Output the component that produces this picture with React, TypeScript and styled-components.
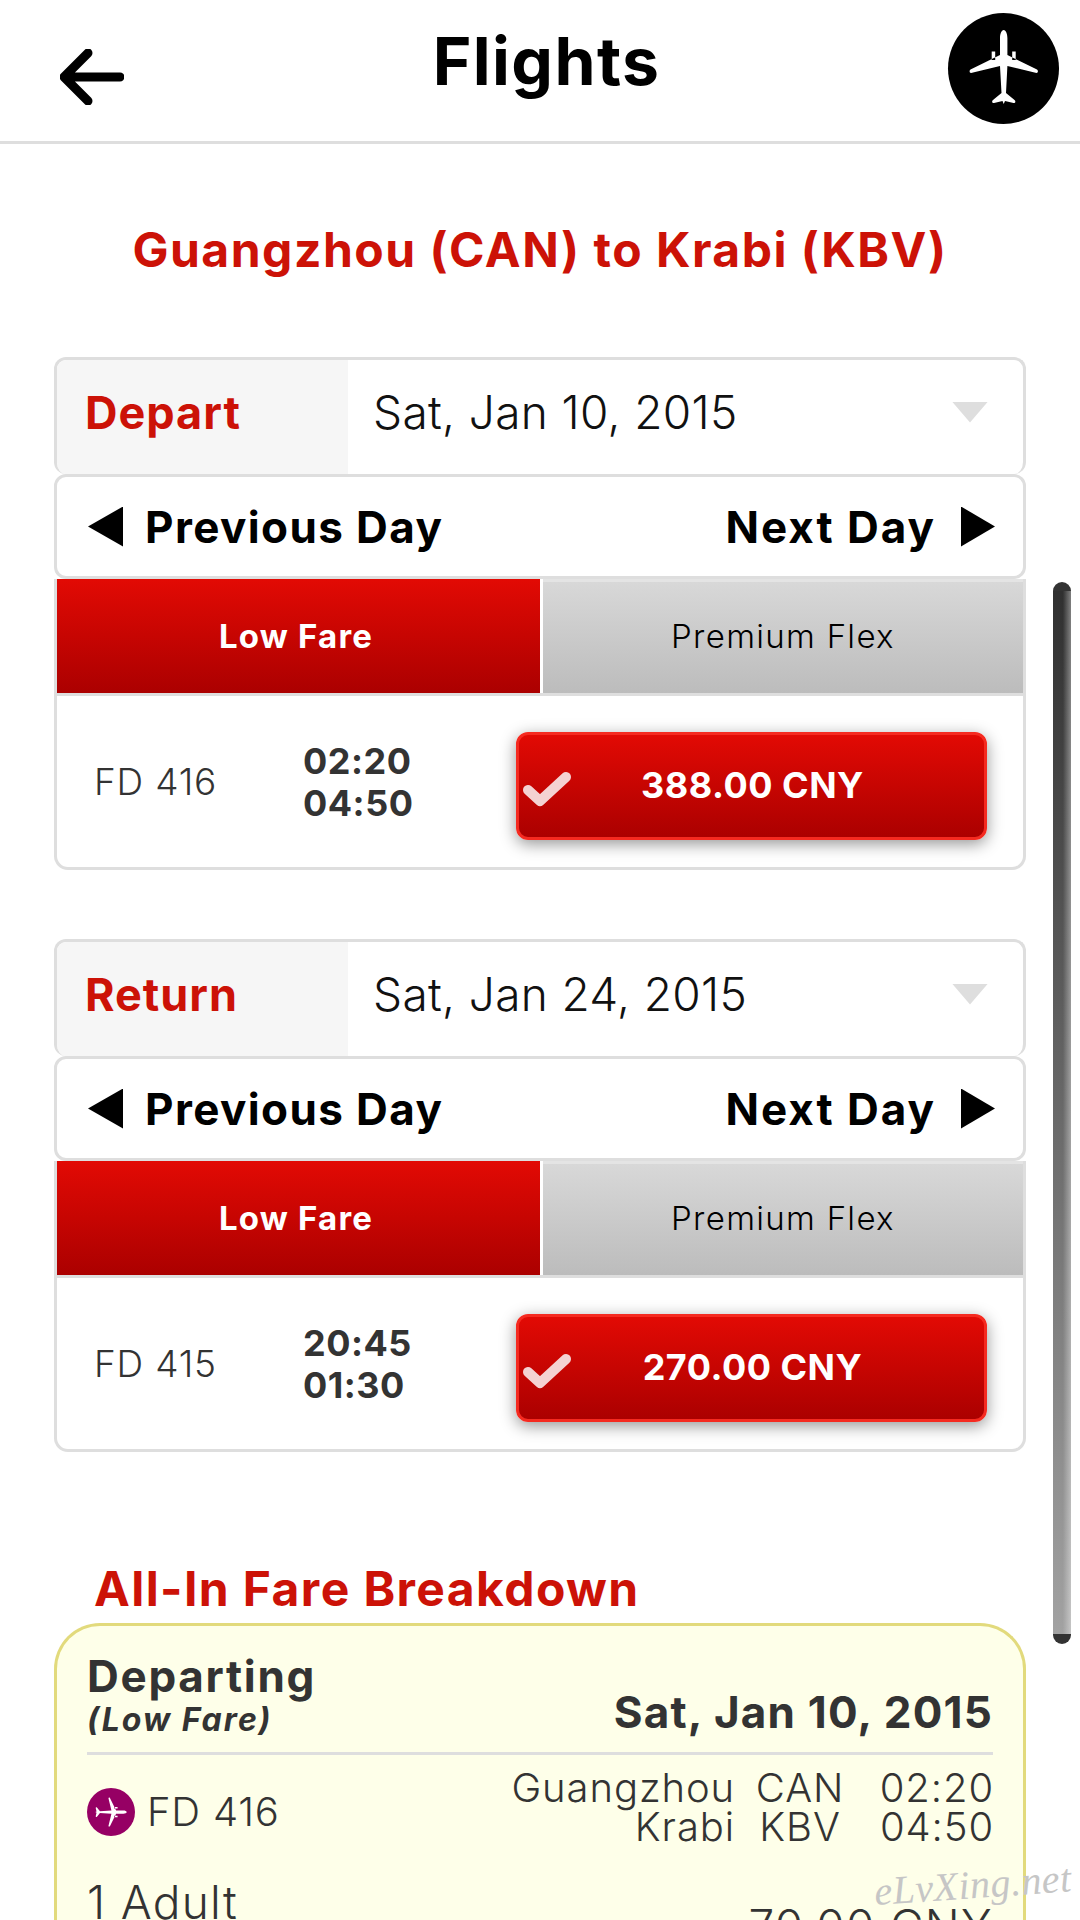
import React from 'react';
import styled, { createGlobalStyle } from 'styled-components';

const FONT = `Inter, "Open Sans", "Liberation Sans", sans-serif`;
const RED = '#cc1207';

const GlobalStyle = createGlobalStyle`
  html, body {
    margin: 0;
    padding: 0;
    background: #ffffff;
  }
  * {
    box-sizing: border-box;
  }
`;

const Page = styled.div`
  position: relative;
  width: 1080px;
  height: 1920px;
  overflow: hidden;
  background: #ffffff;
  font-family: ${FONT};
  color: #333333;
`;

const Header = styled.header`
  height: 144px;
  border-bottom: 3px solid #dedede;
  display: flex;
  align-items: flex-start;
  justify-content: space-between;
  padding: 13px 21px 0 60px;
`;

const BackIcon = styled.svg`
  width: 64px;
  height: 56px;
  margin-top: 36px;
`;

const Title = styled.h1`
  margin: 11px 0 0 21px;
  font-size: 66px;
  line-height: 74px;
  font-weight: 700;
  letter-spacing: 1.4px;
  color: #000000;
`;

const PlaneBadge = styled.div`
  width: 111px;
  height: 111px;
  border-radius: 50%;
  background: #000000;
`;

const RouteTitle = styled.h2`
  margin: 0;
  padding-top: 78px;
  height: 213px;
  text-align: center;
  font-size: 48px;
  line-height: 56px;
  font-weight: 700;
  letter-spacing: 1.5px;
  color: ${RED};
`;

const Sections = styled.div`
  margin: 0 54px;
  display: flex;
  flex-direction: column;
  gap: 69px;
`;

const Section = styled.section`
  display: flex;
  flex-direction: column;
`;

const DateBox = styled.div`
  height: 117px;
  border: 3px solid #dedede;
  border-bottom: 0;
  border-radius: 12px;
  display: flex;
  overflow: hidden;
`;

const DateLabel = styled.div`
  width: 291px;
  background: #f6f6f6;
  padding: 0 0 10px 28px;
  display: flex;
  align-items: center;
  font-size: 45px;
  font-weight: 700;
  letter-spacing: 1px;
  color: ${RED};
`;

const DateValue = styled.div`
  flex: 1;
  display: flex;
  align-items: center;
  justify-content: space-between;
  padding: 0 35px 10px 25px;
  font-size: 46px;
  font-weight: 300;
  letter-spacing: 0.35px;
  color: #111111;
`;

const Triangle = styled.span<{ $dir: 'left' | 'right' | 'down'; $w: number; $h: number; $color: string }>`
  display: block;
  flex: none;
  width: ${(p) => p.$w}px;
  height: ${(p) => p.$h}px;
  background: ${(p) => p.$color};
  clip-path: ${(p) =>
    p.$dir === 'left'
      ? 'polygon(100% 0, 100% 100%, 0 50%)'
      : p.$dir === 'right'
      ? 'polygon(0 0, 100% 50%, 0 100%)'
      : 'polygon(0 0, 100% 0, 50% 100%)'};
`;

const DayNav = styled.div`
  height: 105px;
  border: 3px solid #dedede;
  border-radius: 12px;
  display: flex;
  align-items: center;
  justify-content: space-between;
  padding: 0 28px 0 31px;
`;

const DayLink = styled.div<{ $next?: boolean }>`
  display: flex;
  align-items: center;
  gap: ${(p) => (p.$next ? '25px' : '22px')};
  font-size: 44px;
  font-weight: 700;
  letter-spacing: ${(p) => (p.$next ? '2px' : '1.4px')};
  color: #000000;
`;

const FareCard = styled.div`
  border: 3px solid #dedede;
  border-top: 0;
  border-radius: 0 0 14px 14px;
  overflow: hidden;
`;

const Tabs = styled.div`
  display: flex;
  height: 117px;
  border-bottom: 3px solid #dedede;
`;

const Tab = styled.div<{ $active?: boolean }>`
  flex: 1;
  display: flex;
  align-items: center;
  justify-content: center;
  font-size: 33px;
  letter-spacing: ${(p) => (p.$active ? '1.2px' : '1.3px')};
  font-weight: ${(p) => (p.$active ? 700 : 300)};
  color: ${(p) => (p.$active ? '#ffffff' : '#000000')};
  background: ${(p) =>
    p.$active
      ? 'linear-gradient(#e20a04, #ab0000)'
      : 'linear-gradient(#d8d8d8, #bcbcbc)'};
  ${(p) =>
    p.$active
      ? 'margin-right: 3px; flex: 0 0 483px; padding-right: 5px;'
      : 'border-top: 3px solid #e4e4e4; padding-bottom: 3px;'}
`;

const FareRow = styled.div`
  height: 171px;
  display: flex;
  align-items: center;
  padding: 0 36px 0 37px;
`;

const FlightNo = styled.div`
  width: 209px;
  font-size: 37px;
  font-weight: 300;
  letter-spacing: 0.8px;
  color: #333333;
`;

const Times = styled.div`
  flex: 1;
  font-size: 36px;
  line-height: 42px;
  font-weight: 700;
  letter-spacing: 0.5px;
  color: #333333;
`;

const PriceButton = styled.button`
  position: relative;
  width: 471px;
  height: 108px;
  margin-top: 8px;
  padding: 0 0 2px 2px;
  border: 3px solid #f52a20;
  border-radius: 12px;
  background: linear-gradient(#e20a04, #ab0000);
  box-shadow: 0 4px 16px rgba(0, 0, 0, 0.42);
  font-family: ${FONT};
  font-size: 36px;
  font-weight: 700;
  letter-spacing: 0.5px;
  color: #ffffff;
`;

const CheckIcon = styled.svg`
  position: absolute;
  left: 4px;
  top: 37px;
  width: 48px;
  height: 35px;
`;

const BreakdownTitle = styled.h2`
  margin: 107px 0 0 94px;
  height: 64px;
  font-size: 48px;
  line-height: 60px;
  font-weight: 700;
  letter-spacing: 1.4px;
  color: ${RED};
`;

const BreakdownCard = styled.div`
  margin: 0 54px;
  height: 340px;
  padding: 26px 30px 0 30px;
  border: 3px solid #e2da7c;
  border-bottom: 0;
  border-radius: 46px 46px 0 0;
  background: #feffe9;
`;

const LegHeader = styled.div`
  display: flex;
  align-items: flex-end;
  justify-content: space-between;
  height: 103px;
  border-bottom: 3px solid #dedede;
  padding-bottom: 14px;
`;

const LegTitle = styled.div`
  margin-bottom: 2px;
  font-size: 44px;
  line-height: 46px;
  font-weight: 700;
  letter-spacing: 1.7px;
  color: #333333;
`;

const LegSub = styled.div`
  font-size: 32px;
  line-height: 37px;
  font-weight: 700;
  font-style: italic;
  letter-spacing: 2px;
  color: #333333;
`;

const LegDate = styled.div`
  margin-bottom: 3px;
  font-size: 44px;
  line-height: 46px;
  font-weight: 700;
  letter-spacing: 1.2px;
  color: #333333;
`;

const LegRow = styled.div`
  display: flex;
  align-items: flex-start;
  justify-content: space-between;
  padding-top: 13px;
`;

const LegFlight = styled.div`
  display: flex;
  align-items: center;
  gap: 12px;
  margin-top: 19px;
  font-size: 40px;
  font-weight: 300;
  letter-spacing: 0.8px;
`;

const PurpleBadge = styled.div`
  width: 48px;
  height: 48px;
  border-radius: 50%;
  background: #960064;
  display: flex;
  align-items: center;
  justify-content: center;
`;

const SmallPlane = styled.svg`
  width: 34px;
  height: 34px;
  transform: rotate(90deg);
`;

const RouteGrid = styled.div`
  display: grid;
  grid-template-columns: auto 90px 129px;
  column-gap: 20px;
  margin-right: -1px;
  font-size: 40px;
  line-height: 39px;
  font-weight: 300;
  letter-spacing: 0.9px;
  color: #333333;
`;

const City = styled.div`
  text-align: right;
`;

const Code = styled.div`
  text-align: center;
`;

const Clock = styled.div`
  text-align: right;
`;

const PaxRow = styled.div`
  display: flex;
  align-items: flex-start;
  justify-content: space-between;
  margin-top: 29px;
  font-size: 46px;
  line-height: 54px;
  font-weight: 300;
  letter-spacing: 1.3px;
`;

const PaxPrice = styled.div`
  margin-top: 24px;
`;

const Scrollbar = styled.div`
  position: absolute;
  left: 1053px;
  top: 591px;
  width: 18px;
  height: 1043px;
  background:
    linear-gradient(to right, rgba(255, 255, 255, 0) 55%, rgba(255, 255, 255, 0.38) 100%),
    linear-gradient(#303030, #a2a2a2);

  &::before,
  &::after {
    content: '';
    position: absolute;
    left: 0;
    width: 18px;
    height: 9px;
    background: #333333;
  }
  &::before {
    top: -9px;
    border-radius: 9px 9px 0 0;
  }
  &::after {
    bottom: -10px;
    height: 10px;
    border-radius: 0 0 9px 9px;
  }
`;

const Watermark = styled.div`
  position: absolute;
  left: 876px;
  top: 1868px;
  font-family: "Liberation Serif", serif;
  font-style: italic;
  font-size: 40px;
  line-height: 48px;
  letter-spacing: 0.5px;
  color: #c6c6c6;
  transform: rotate(-4deg);
  transform-origin: left bottom;
  white-space: nowrap;
`;

const PLANE_PATH =
  'M55.7 17C53.5 17 52 21 52 25L52 42 22.5 56.5C21 57.5 21.5 60 23 60L52 53 53.5 80 45 87C43.5 88.5 44 90 46 90L54.5 88 55.7 91 57 88 65.5 90C67.5 90 68 88.5 66.5 87L58 80 59.4 53 88.5 60C90 60 90.5 57.5 89 56.5L59.4 42 59.4 25C59.4 21 57.9 17 55.7 17ZM43.7 38.5H47.2V47H43.7ZM64.2 38.5H67.7V47H64.2Z';

type Flight = {
  label: string;
  date: string;
  flightNo: string;
  depart: string;
  arrive: string;
  price: string;
};

const flights: Flight[] = [
  { label: 'Depart', date: 'Sat, Jan 10, 2015', flightNo: 'FD 416', depart: '02:20', arrive: '04:50', price: '388.00 CNY' },
  { label: 'Return', date: 'Sat, Jan 24, 2015', flightNo: 'FD 415', depart: '20:45', arrive: '01:30', price: '270.00 CNY' },
];

function FlightBlock({ flight }: { flight: Flight }) {
  return (
    <Section>
      <DateBox>
        <DateLabel>{flight.label}</DateLabel>
        <DateValue>
          {flight.date}
          <Triangle $dir="down" $w={36} $h={21} $color="#dedede" />
        </DateValue>
      </DateBox>
      <DayNav>
        <DayLink>
          <Triangle $dir="left" $w={35} $h={40} $color="#000000" />
          Previous Day
        </DayLink>
        <DayLink $next>
          Next Day
          <Triangle $dir="right" $w={34} $h={40} $color="#000000" />
        </DayLink>
      </DayNav>
      <FareCard>
        <Tabs>
          <Tab $active>Low Fare</Tab>
          <Tab>Premium Flex</Tab>
        </Tabs>
        <FareRow>
          <FlightNo>{flight.flightNo}</FlightNo>
          <Times>
            {flight.depart}
            <br />
            {flight.arrive}
          </Times>
          <PriceButton>
            <CheckIcon viewBox="0 0 48 35">
              <polyline points="5,18 17,29 43,5" fill="none" stroke="#f4d2d2" strokeWidth="10" strokeLinejoin="round" strokeLinecap="round" />
            </CheckIcon>
            {flight.price}
          </PriceButton>
        </FareRow>
      </FareCard>
    </Section>
  );
}

export default function App() {
  return (
    <Page>
      <GlobalStyle />
      <Header>
        <BackIcon viewBox="0 0 64 56">
          <path d="M28 4 L4 28 L28 52 M4 28 H60" fill="none" stroke="#000000" strokeWidth="9" strokeLinecap="round" strokeLinejoin="round" />
        </BackIcon>
        <Title>Flights</Title>
        <PlaneBadge>
          <svg viewBox="0 0 111 111" width="111" height="111">
            <path d={PLANE_PATH} fill="#ffffff" />
          </svg>
        </PlaneBadge>
      </Header>
      <RouteTitle>Guangzhou (CAN) to Krabi (KBV)</RouteTitle>
      <Sections>
        {flights.map((f) => (
          <FlightBlock key={f.label} flight={f} />
        ))}
      </Sections>
      <BreakdownTitle>All-In Fare Breakdown</BreakdownTitle>
      <BreakdownCard>
        <LegHeader>
          <div>
            <LegTitle>Departing</LegTitle>
            <LegSub>(Low Fare)</LegSub>
          </div>
          <LegDate>Sat, Jan 10, 2015</LegDate>
        </LegHeader>
        <LegRow>
          <LegFlight>
            <PurpleBadge>
              <SmallPlane viewBox="18 14 75 80">
                <path d={PLANE_PATH} fill="#ffffff" />
              </SmallPlane>
            </PurpleBadge>
            FD 416
          </LegFlight>
          <RouteGrid>
            <City>Guangzhou</City>
            <Code>CAN</Code>
            <Clock>02:20</Clock>
            <City>Krabi</City>
            <Code>KBV</Code>
            <Clock>04:50</Clock>
          </RouteGrid>
        </LegRow>
        <PaxRow>
          1 Adult
          <PaxPrice>70.00 CNY</PaxPrice>
        </PaxRow>
      </BreakdownCard>
      <Scrollbar />
      <Watermark>eLvXing.net</Watermark>
    </Page>
  );
}
